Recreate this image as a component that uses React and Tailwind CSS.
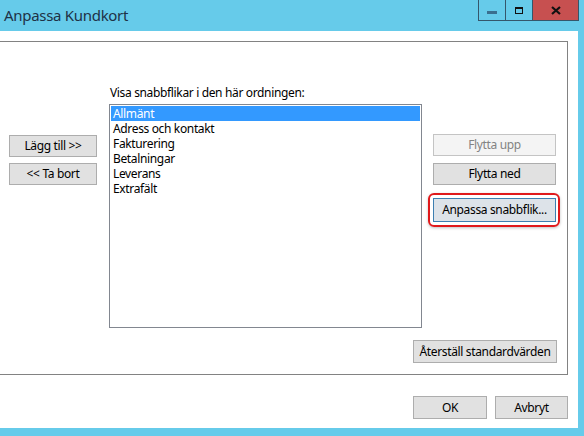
import React from 'react';

const font = { fontFamily: '"Noto Sans", "Open Sans", sans-serif' };

function WinButton({ children, className = '' }) {
  return (
    <button
      type="button"
      className={`flex items-center justify-center border text-[12px] leading-none tracking-[-0.35px] ${className}`}
      style={font}
    >
      {children}
    </button>
  );
}

const items = ['Allmänt', 'Adress och kontakt', 'Fakturering', 'Betalningar', 'Leverans', 'Extrafält'];

export default function App() {
  return (
    <div className="w-[584px] h-[436px] bg-[#66cbea] overflow-hidden" style={font}>
      {/* Title bar */}
      <div className="h-[31px] flex items-start justify-between">
        <div className="pl-[4px] pt-[6px] text-[15px] leading-[18px] tracking-[-0.3px] text-[#1e3246]">Anpassa Kundkort</div>
        <div className="flex mr-[5px] h-[21px] border border-t-0 border-[#35566b]">
          <div className="w-[27px] flex items-center justify-center border-r border-[#35566b]">
            <div className="w-[10px] h-[3px] bg-[#3a6f8f] mt-[5px]" />
          </div>
          <div className="w-[26px] flex items-center justify-center">
            <div className="w-[8px] h-[7px] border border-t-2 border-[#111]" />
          </div>
          <div className="w-[46px] flex items-center justify-center bg-[#c75050] border-l border-[#35566b]">
            <svg width="10" height="9" viewBox="0 0 10 9">
              <path d="M1 1 L9 8 M9 1 L1 8" stroke="#111" strokeWidth="2.2" />
            </svg>
          </div>
        </div>
      </div>

      {/* Client area */}
      <div className="w-[578px] h-[397px] bg-white pt-[10px]">
        <div className="w-[568px] h-[334px] border border-l-0 border-[#828282] flex flex-col">
          <div className="flex items-start">
            {/* Left buttons */}
            <div className="ml-[9px] mt-[93px] w-[88px] flex flex-col gap-[6px]">
              <WinButton className="h-[22px] bg-[#e1e1e1] border-[#adadad] text-black">Lägg till &gt;&gt;</WinButton>
              <WinButton className="h-[22px] bg-[#e1e1e1] border-[#adadad] text-black">&lt;&lt; Ta bort</WinButton>
            </div>

            {/* List */}
            <div className="ml-[12px] mt-[43px] flex flex-col">
              <div className="h-[15px] pl-[1px] text-[12px] leading-[15px] tracking-[-0.35px] text-black mb-[4px]">
                Visa snabbflikar i den här ordningen:
              </div>
              <div className="w-[313px] h-[224px] border border-[#828790] p-[1px]">
                {items.map((item, i) => (
                  <div
                    key={item}
                    className={`h-[15px] px-[2px] text-[12px] leading-[15px] tracking-[-0.35px] overflow-hidden ${
                      i === 0 ? 'bg-[#3399ff] text-white' : 'text-black'
                    }`}
                  >
                    {item}
                  </div>
                ))}
              </div>
            </div>

            {/* Right buttons */}
            <div className="ml-[11px] mt-[92px] w-[123px] flex flex-col">
              <WinButton className="h-[22px] bg-[#f4f4f4] border-[#c4c4c4] text-[#838383]">Flytta upp</WinButton>
              <WinButton className="h-[22px] mt-[7px] bg-[#e1e1e1] border-[#adadad] text-black">Flytta ned</WinButton>
              <div className="relative mt-[13px]">
                <div className="absolute -left-[5px] -right-[4px] -top-[5px] -bottom-[5px] rounded-[6px] border-2 border-[#e0191b] shadow-[0_1px_3px_rgba(0,0,0,0.25)]" />
                <WinButton className="relative w-full h-[24px] bg-[#dde3e9] border-[#3c7fb1] text-black">
                  Anpassa snabbflik...
                </WinButton>
              </div>
            </div>
          </div>

          <div className="flex justify-end mt-[12px] pr-[10px]">
            <WinButton className="w-[144px] h-[23px] bg-[#e1e1e1] border-[#adadad] text-black">
              Återställ standardvärden
            </WinButton>
          </div>
        </div>

        {/* Dialog buttons */}
        <div className="flex justify-end gap-[8px] mt-[21px] pr-[10px]">
          <WinButton className="w-[74px] h-[23px] bg-[#e1e1e1] border-[#adadad] text-black">OK</WinButton>
          <WinButton className="w-[73px] h-[23px] bg-[#e1e1e1] border-[#adadad] text-black">Avbryt</WinButton>
        </div>
      </div>
    </div>
  );
}
